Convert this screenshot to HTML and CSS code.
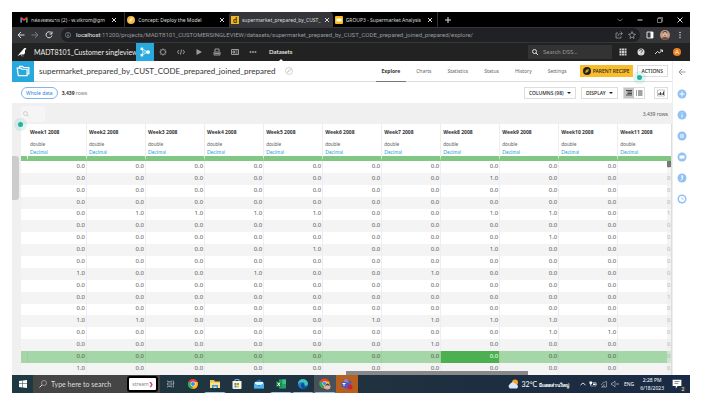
FILE: index.html
```html
<!DOCTYPE html>
<html lang="en">
<head>
<meta charset="utf-8">
<title>supermarket_prepared_by_CUST_CODE_prepared_joined_prepared</title>
<link rel="stylesheet" href="styles.css">
</head>
<body>
<div class="screen">
  <header class="tabs">
    <div class="tab tab-mail">
      <svg class="i8" viewBox="0 0 16 16"><path d="M1 3v10h3V7l4 3 4-3v6h3V3l-2-1-5 4-5-4z" fill="#ea4335"/><path d="M1 4v9h3V6z" fill="#4285f4"/><path d="M12 6v7h3V4z" fill="#34a853"/></svg>
      <span class="tab-name">กล่องจดหมาย (2) - w.vikrom@gm</span><button class="x" aria-label="Close"><svg class="i6" viewBox="0 0 12 12"><path d="M2 2l8 8M10 2l-8 8" class="ln"/></svg></button>
    </div>
    <div class="tab tab-concept">
      <svg class="i8" viewBox="0 0 16 16"><circle cx="8" cy="8" r="8" fill="#f4b942"/><path d="M4 12c1-5 4-8 8-9-1 5-4 8-8 9z" fill="#fff3c8"/></svg>
      <span class="tab-name">Concept: Deploy the Model</span><button class="x" aria-label="Close"><svg class="i6" viewBox="0 0 12 12"><path d="M2 2l8 8M10 2l-8 8" class="ln"/></svg></button>
    </div>
    <div class="tab tab-data on">
      <span class="dlogo">d</span>
      <span class="tab-name">supermarket_prepared_by_CUST_</span><button class="x" aria-label="Close"><svg class="i6" viewBox="0 0 12 12"><path d="M2 2l8 8M10 2l-8 8" class="ln"/></svg></button>
    </div>
    <div class="tab tab-group">
      <svg class="i8" viewBox="0 0 16 16"><rect width="16" height="16" rx="2" fill="#f9bc15"/><rect x="3" y="5" width="10" height="6" fill="#fff"/></svg>
      <span class="tab-name">GROUP3 - Supermarket Analysis</span><button class="x" aria-label="Close"><svg class="i6" viewBox="0 0 12 12"><path d="M2 2l8 8M10 2l-8 8" class="ln"/></svg></button>
    </div>
    <button class="plus" aria-label="New tab"><svg class="i8" viewBox="0 0 16 16"><path d="M8 2v12M2 8h12" class="ln"/></svg></button>
    <div class="wincontrols">
      <svg class="i6" viewBox="0 0 12 12"><path d="M1 4l5 4 5-4" class="thin"/></svg>
      <svg class="i6" viewBox="0 0 12 12"><path d="M1 6h10" class="ln"/></svg>
      <svg class="i6" viewBox="0 0 12 12"><path d="M1 3h8v8H1zM3 3V1h8v8H9" class="thin"/></svg>
      <svg class="i6" viewBox="0 0 12 12"><path d="M1 1l10 10M11 1L1 11" class="ln"/></svg>
    </div>
  </header>

  <div class="address">
    <svg class="i8" viewBox="0 0 16 16"><path d="M15 8H2M8 2L2 8l6 6" class="ln"/></svg>
    <svg class="i8 faint" viewBox="0 0 16 16"><path d="M1 8h13M8 2l6 6-6 6" class="ln"/></svg>
    <svg class="i8" viewBox="0 0 16 16"><path d="M13 4a6 6 0 1 0 1 5M14 1v5H9" class="ln"/></svg>
    <div class="url">
      <svg class="i6" viewBox="0 0 16 16"><circle cx="8" cy="8" r="7" class="thin"/><path d="M8 7v5M8 4v1" class="ln"/></svg>
      <span class="url-text"><b>localhost</b>:11200/projects/MADT8101_CUSTOMERSINGLEVIEW/datasets/supermarket_prepared_by_CUST_CODE_prepared_joined_prepared/explore/</span>
      <svg class="i8" viewBox="0 0 16 16"><path d="M6 4H2v10h10v-3M6 10c0-4 3-5 8-5M11 1l4 4-4 4" class="thin"/></svg>
      <svg class="i8" viewBox="0 0 16 16"><path d="M8 1l2 5 5 .5-4 3.500 1 5L8 12l-4 3 1-5-4-3.500L6 6z" class="thin"/></svg>
    </div>
    <svg class="i8" viewBox="0 0 16 16"><path d="M2 2h12v12H2z" class="ln"/><path d="M9 2h5v12H9z" fill="#fff"/></svg>
    <svg class="avatar" viewBox="0 0 20 20"><circle cx="10" cy="10" r="10" fill="#c79783"/><path d="M3 17q7-7 14 0a10 10 0 0 1-14 0z" fill="#6c4e46"/><circle cx="10" cy="8" r="5" fill="#e3bda6"/><path d="M5 8q0-6 5-6t5 6q-2-4-5-4T5 8z" fill="#4d3530"/><path d="M7 8h2M11 8h2M8 11h4" stroke="#684034"/></svg>
    <svg class="i8" viewBox="0 0 16 16"><g fill="#ddd"><circle cx="8" cy="3" r="1.500"/><circle cx="8" cy="8" r="1.500"/><circle cx="8" cy="13" r="1.500"/></g></svg>
  </div>

  <nav class="dssnav">
    <svg class="bird" viewBox="0 0 20 20"><path d="M17 2q-3-1-4 2L6 12l-5 6 7-3h6q3-3 2-9l3-2z" fill="#fff"/><path d="M9 15v3h4" class="thin"/></svg>
    <span class="project">MADT8101_Customer singleview</span>
    <a class="flow" href="#" aria-label="Flow"><svg class="i10" viewBox="0 0 16 16"><path d="M3 3l10 5-10 5M3 3l2 5h8M5 8l-2 5" stroke="#fff" fill="none"/><g fill="#fff"><rect x="1" y="1" width="4" height="4"/><rect x="1" y="11" width="4" height="4"/><circle cx="13" cy="8" r="3"/></g></svg></a>
    <div class="navicons">
      <svg class="i8" viewBox="0 0 16 16"><circle cx="8" cy="8" r="5" class="ln"/><path d="M8 0v3M8 13v3M0 8h3M13 8h3M2 2l2 2M12 12l2 2M14 2l-2 2M4 12l-2 2" class="thin"/></svg>
      <svg class="i8" viewBox="0 0 16 16"><path d="M4 4L1 8l3 4M12 4l3 4-3 4M9 3L7 13" class="ln"/></svg>
      <svg class="i8" viewBox="0 0 16 16"><path d="M3 2l11 6-11 6z" fill="#ddd"/></svg>
      <svg class="i8" viewBox="0 0 16 16"><path d="M4 7V2h8v5M2 14V8h12v6zM3 11h10" class="ln"/></svg>
      <svg class="i8" viewBox="0 0 16 16"><path d="M1 3h14v10H1zM4 6h3v4H4zM9 6h4M9 10h4" class="ln"/></svg>
      <svg class="i8" viewBox="0 0 16 16"><g fill="#ddd"><circle cx="3" cy="8" r="2"/><circle cx="8" cy="8" r="2"/><circle cx="13" cy="8" r="2"/></g></svg>
    </div>
    <a class="datasets" href="#">Datasets</a>
    <label class="search"><svg class="i6" viewBox="0 0 12 12"><circle cx="5" cy="5" r="4" class="ln"/><path d="M8 8l4 4" class="ln"/></svg><input type="text" placeholder="Search DSS..." aria-label="Search DSS"></label>
    <div class="navright">
      <svg class="i8" viewBox="0 0 16 16"><path d="M1 1h4v4H1zM6 1h4v4H6zM11 1h4v4h-4zM1 6h4v4H1zM6 6h4v4H6zM11 6h4v4h-4zM1 11h4v4H1zM6 11h4v4H6zM11 11h4v4h-4z" fill="#ccc"/></svg>
      <svg class="i8" viewBox="0 0 16 16"><circle cx="8" cy="8" r="7" fill="#ddd"/><path d="M5 6q0-3 3-3t3 3q0 1-3 3v1M8 12v1" stroke="#333" stroke-width="1.500" fill="none"/></svg>
      <svg class="i8" viewBox="0 0 16 16"><path d="M0 12l5-5 4 3 6-6M10 4h5v4" class="ln"/></svg>
      <span class="user">A</span>
    </div>
  </nav>

  <div class="work">
    <main class="main">
      <div class="titlebar">
        <span class="folder"><svg viewBox="0 0 24 20"><path d="M6 5V2h5l2 2h9v11h-3" class="fo"/><path d="M2 5h6l2 2h9v11H4z" class="fo"/></svg></span>
        <h1>supermarket_prepared_by_CUST_CODE_prepared_joined_prepared</h1>
        <svg class="i8 badge" viewBox="0 0 16 16"><circle cx="8" cy="8" r="7" fill="none" stroke="#aaa"/><path d="M5 11l1-3 5-4 1 1-5 5z" fill="none" stroke="#aaa"/></svg>
        <div class="sections">
          <a class="current" href="#">Explore</a><a href="#">Charts</a><a href="#">Statistics</a><a href="#">Status</a><a href="#">History</a><a href="#">Settings</a>
        </div>
        <button class="parent"><svg class="i8" viewBox="0 0 16 16"><circle cx="8" cy="8" r="8" fill="#222"/><path d="M4 12l2-6 6-2-2 6z" fill="#d9a21c"/></svg>PARENT RECIPE</button>
        <button class="actions">ACTIONS<span class="dot"></span></button>
      </div>
      <div class="toolbar">
        <button class="whole">Whole data</button>
        <span class="count"><b>3,439</b> rows</span>
        <button class="box columns">COLUMNS (98) <i class="caret"></i></button>
        <button class="box display">DISPLAY <i class="caret"></i></button>
        <div class="toggle">
          <button class="picked" aria-label="Compact"><svg class="i8" viewBox="0 0 16 16"><path d="M2 3h12M5 6h9M5 9h9M2 12h12" stroke="#444" stroke-width="2"/></svg></button>
          <button aria-label="List"><svg class="i8" viewBox="0 0 16 16"><path d="M2 4h2M6 4h9M2 8h2M6 8h9M2 12h2M6 12h9" stroke="#444" stroke-width="2"/></svg></button>
        </div>
        <button class="box chart" aria-label="Statistics"><svg class="i8" viewBox="0 0 16 16"><path d="M1 2h14v12H1z" fill="none" stroke="#888"/><path d="M4 12V8M7 12V6M10 12V8M13 12V5" stroke="#444" stroke-width="2"/></svg></button>
      </div>
      <div class="filter">
        <label class="find"><svg class="i6" viewBox="0 0 12 12"><circle cx="5" cy="5" r="4" fill="none" stroke="#aaa"/><path d="M8 8l3 3" stroke="#aaa"/></svg><input type="text" aria-label="Filter"></label>
        <span>3,439 rows</span>
        <span class="dot"></span>
      </div>
      <div class="gridarea">
        <span class="handle"></span>
        <div class="scroller">
          <table>
            <thead>
              <tr><th class="gut"></th><th>Week1 2008<small>double</small><em>Decimal</em></th><th>Week2 2008<small>double</small><em>Decimal</em></th><th>Week3 2008<small>double</small><em>Decimal</em></th><th>Week4 2008<small>double</small><em>Decimal</em></th><th>Week5 2008<small>double</small><em>Decimal</em></th><th>Week6 2008<small>double</small><em>Decimal</em></th><th>Week7 2008<small>double</small><em>Decimal</em></th><th>Week8 2008<small>double</small><em>Decimal</em></th><th>Week9 2008<small>double</small><em>Decimal</em></th><th>Week10 2008<small>double</small><em>Decimal</em></th><th>Week11 2008<small>double</small><em>Decimal</em></th></tr>
            </thead>
            <tbody>
              <tr><td></td><td>0.0</td><td>0.0</td><td>0.0</td><td>0.0</td><td>0.0</td><td>0.0</td><td>0.0</td><td>0.0</td><td>0.0</td><td>0.0</td><td>0.0</td></tr>
              <tr><td></td><td>0.0</td><td>0.0</td><td>0.0</td><td>0.0</td><td>0.0</td><td>0.0</td><td>0.0</td><td>1.0</td><td>0.0</td><td>0.0</td><td>0.0</td></tr>
              <tr><td></td><td>0.0</td><td>0.0</td><td>0.0</td><td>0.0</td><td>0.0</td><td>0.0</td><td>0.0</td><td>0.0</td><td>0.0</td><td>0.0</td><td>0.0</td></tr>
              <tr><td></td><td>0.0</td><td>0.0</td><td>0.0</td><td>0.0</td><td>0.0</td><td>0.0</td><td>0.0</td><td>0.0</td><td>0.0</td><td>0.0</td><td>0.0</td></tr>
              <tr><td></td><td>0.0</td><td>1.0</td><td>1.0</td><td>1.0</td><td>1.0</td><td>0.0</td><td>0.0</td><td>1.0</td><td>1.0</td><td>0.0</td><td>1.0</td></tr>
              <tr><td></td><td>0.0</td><td>0.0</td><td>0.0</td><td>0.0</td><td>0.0</td><td>0.0</td><td>0.0</td><td>0.0</td><td>0.0</td><td>0.0</td><td>0.0</td></tr>
              <tr><td></td><td>0.0</td><td>0.0</td><td>0.0</td><td>0.0</td><td>0.0</td><td>0.0</td><td>0.0</td><td>0.0</td><td>1.0</td><td>0.0</td><td>0.0</td></tr>
              <tr><td></td><td>0.0</td><td>0.0</td><td>0.0</td><td>0.0</td><td>1.0</td><td>0.0</td><td>0.0</td><td>1.0</td><td>0.0</td><td>0.0</td><td>0.0</td></tr>
              <tr><td></td><td>0.0</td><td>0.0</td><td>0.0</td><td>0.0</td><td>0.0</td><td>0.0</td><td>0.0</td><td>0.0</td><td>0.0</td><td>0.0</td><td>0.0</td></tr>
              <tr><td></td><td>1.0</td><td>0.0</td><td>0.0</td><td>1.0</td><td>0.0</td><td>0.0</td><td>1.0</td><td>0.0</td><td>0.0</td><td>0.0</td><td>0.0</td></tr>
              <tr><td></td><td>0.0</td><td>0.0</td><td>0.0</td><td>0.0</td><td>0.0</td><td>0.0</td><td>0.0</td><td>0.0</td><td>0.0</td><td>0.0</td><td>0.0</td></tr>
              <tr><td></td><td>0.0</td><td>0.0</td><td>0.0</td><td>0.0</td><td>0.0</td><td>0.0</td><td>0.0</td><td>0.0</td><td>0.0</td><td>0.0</td><td>1.0</td></tr>
              <tr><td></td><td>0.0</td><td>0.0</td><td>0.0</td><td>0.0</td><td>0.0</td><td>0.0</td><td>0.0</td><td>0.0</td><td>0.0</td><td>0.0</td><td>0.0</td></tr>
              <tr><td></td><td>1.0</td><td>1.0</td><td>0.0</td><td>0.0</td><td>0.0</td><td>1.0</td><td>1.0</td><td>1.0</td><td>1.0</td><td>0.0</td><td>0.0</td></tr>
              <tr><td></td><td>0.0</td><td>0.0</td><td>0.0</td><td>0.0</td><td>0.0</td><td>0.0</td><td>0.0</td><td>0.0</td><td>1.0</td><td>1.0</td><td>0.0</td></tr>
              <tr><td></td><td>0.0</td><td>0.0</td><td>0.0</td><td>0.0</td><td>0.0</td><td>0.0</td><td>1.0</td><td>0.0</td><td>0.0</td><td>0.0</td><td>0.0</td></tr>
              <tr class="sel"><td></td><td>0.0</td><td>0.0</td><td>0.0</td><td>0.0</td><td>0.0</td><td>0.0</td><td>0.0</td><td class="cell">0.0</td><td>0.0</td><td>0.0</td><td>0.0</td></tr>
              <tr><td></td><td>1.0</td><td>0.0</td><td>0.0</td><td>0.0</td><td>0.0</td><td>0.0</td><td>0.0</td><td>0.0</td><td>0.0</td><td>0.0</td><td>0.0</td></tr>
            </tbody>
          </table>
          <span class="vtrack"></span>
          <span class="hthumb"></span>
        </div>
      </div>
    </main>
    <aside class="rail">
      <svg class="i8" viewBox="0 0 16 16"><path d="M15 8H2M8 2L2 8l6 6" stroke="#999" stroke-width="2" fill="none"/></svg>
      <svg class="i10" viewBox="0 0 20 20"><circle cx="10" cy="10" r="9"/><path d="M10 5v10M5 10h10"/></svg>
      <svg class="i10" viewBox="0 0 20 20"><circle cx="10" cy="10" r="9"/><path d="M10 9v6M10 5v2"/></svg>
      <svg class="i10" viewBox="0 0 20 20"><circle cx="10" cy="10" r="9"/><path d="M6 8h8M6 12h8"/></svg>
      <svg class="i10" viewBox="0 0 20 20"><circle cx="10" cy="10" r="9"/><path class="solid" d="M5 7h10v6h-5l-2 2v-2H5z"/></svg>
      <svg class="i10" viewBox="0 0 20 20"><circle cx="10" cy="10" r="9"/><path d="M8 6h4l-3 4h3l-4 5"/></svg>
      <svg class="i10" viewBox="0 0 20 20"><circle cx="10" cy="10" r="9"/><circle class="face" cx="10" cy="10" r="6"/><path d="M10 7v3h3" class="hand"/></svg>
    </aside>
  </div>

  <footer class="taskbar">
    <button class="start" aria-label="Start"><svg class="i8" viewBox="0 0 16 16"><path d="M0 2l7-1v6H0zM8 1l8-1v7H8zM0 8h7v7l-7-1zM8 8h8v8l-8-1z" fill="#fff"/></svg></button>
    <label class="winsearch"><svg class="i8" viewBox="0 0 16 16"><circle cx="10" cy="6" r="5" class="thin"/><path d="M6 10l-5 5" class="ln"/></svg><input type="text" placeholder="Type here to search" aria-label="Type here to search"><span class="stream">stream<b>❯</b></span></label>
    <div class="apps">
      <span class="app"><svg class="i8" viewBox="0 0 16 16"><path d="M1 1v2h9V1M1 15v-2h9v2M1 6h9v4H1zM13 1v14M12 6h3" class="thin"/></svg></span>
      <span class="app"><svg class="i12" viewBox="0 0 24 24"><circle cx="12" cy="12" r="10" fill="#ea4335"/><path d="M12 12L3 7a10 10 0 0 0 8 15z" fill="#34a853"/><path d="M12 12l-1 10A10 10 0 0 0 21 8h-9z" fill="#fbbc05"/><circle cx="12" cy="12" r="5" fill="#fff"/><circle cx="12" cy="12" r="4" fill="#4285f4"/></svg></span>
      <span class="app open"><svg class="i12" viewBox="0 0 24 24"><path d="M2 4h8l2 3h10v13H2z" fill="#f5c542"/><path d="M2 9h20v11H2z" fill="#ffe08a"/><path d="M6 14h12v6h-3v-3H9v3H6z" fill="#3c9be0"/></svg></span>
      <span class="app"><svg class="i12" viewBox="0 0 24 24"><path d="M3 6h18v14q0 2-2 2H5q-2 0-2-2z" fill="#f4f4f4"/><path d="M8 6V3h8v3" stroke="#5bb5ea" stroke-width="2" fill="none"/><path d="M7 10h4v4H7z" fill="#f25022"/><path d="M12 10h4v4h-4z" fill="#7fba00"/><path d="M7 15h4v4H7z" fill="#00a4ef"/><path d="M12 15h4v4h-4z" fill="#ffb900"/></svg></span>
      <span class="app"><svg class="i12" viewBox="0 0 24 24"><path d="M2 9l10-6 10 6v12H2z" fill="#1976c9"/><path d="M4 8h16v6H4z" fill="#e8f4fc"/><path d="M2 10l10 6 10-6v11H2z" fill="#4cb4ee"/></svg></span>
      <span class="app open"><svg class="i12" viewBox="0 0 24 24"><path d="M8 3h14v18H8z" fill="#21a366"/><path d="M15 3h7v9h-7z" fill="#33c481"/><path d="M2 7h11v11H2z" fill="#107c41"/><path d="M5 9l5 7M10 9l-5 7" stroke="#fff" stroke-width="2"/></svg></span>
      <span class="app open"><svg class="i12" viewBox="0 0 24 24"><circle cx="12" cy="12" r="10" fill="#1b7fd4"/><path d="M2 12C2 0 20-1 22 11q0 5-7 4 2-6-4-7-6 0-9 4z" fill="#45c8b0"/><path d="M8 13q1-4 5-3 3 2 1 5 3 3 7 1-4 7-10 5-4-3-3-8z" fill="#0c4f97"/></svg></span>
      <span class="app open lit"><svg class="i12" viewBox="0 0 24 24"><circle cx="11" cy="11" r="10" fill="#ea4335"/><path d="M11 11L2 6a10 10 0 0 0 8 15z" fill="#34a853"/><path d="M11 11l-1 10A10 10 0 0 0 20 7h-9z" fill="#fbbc05"/><circle cx="11" cy="11" r="4" fill="#4285f4" stroke="#fff"/><circle cx="17" cy="17" r="6" fill="#d7b4a2"/><path d="M12 16q1-5 5-5t5 5q-5-3-10 0z" fill="#5b4038"/></svg></span>
      <span class="app alert"><svg class="i12" viewBox="0 0 24 24"><circle cx="10" cy="6" r="4" fill="#7b83eb"/><circle cx="18" cy="8" r="3" fill="#5059c9"/><path d="M4 10h16v6q-2 6-8 6t-8-6z" fill="#5059c9"/><path d="M1 8h10v10H1z" fill="#4b53bc"/><path d="M3 11h6M6 11v5" stroke="#fff" stroke-width="2"/><circle cx="18" cy="18" r="5" fill="#d1202f"/></svg></span>
    </div>
    <div class="tray">
      <svg class="i12" viewBox="0 0 24 24"><circle cx="16" cy="9" r="6" fill="#f7a32c"/><path d="M6 21a5 5 0 0 1 0-9 6 6 0 0 1 11 0 5 5 0 0 1 3 9z" fill="#d8e6f7"/></svg>
      <span class="weather">32°C <b>มีแดดส่วนใหญ่</b></span>
      <svg class="i6" viewBox="0 0 12 12"><path d="M1 8l5-4 5 4" class="ln"/></svg>
      <svg class="i8" viewBox="0 0 16 16"><path d="M3 5h11v7H3zM15 7v3" class="thin"/><path d="M1 3h5v4l-2 3-3-3zM8 7h5v3H8z" fill="#fff"/></svg>
      <svg class="i8" viewBox="0 0 16 16"><path d="M2 14h1M5 14q0-4 4-5M8 14q0-2 2-2M2 10q3-6 11-7v11H3" class="thin"/></svg>
      <svg class="i8" viewBox="0 0 16 16"><path d="M1 6h3l4-4v12l-4-4H1zM11 6l4 4M15 6l-4 4" class="thin"/></svg>
      <span class="lang">ENG</span>
      <span class="clock">2:28 PM<br>6/18/2023</span>
      <span class="notes"><svg class="i10" viewBox="0 0 16 16"><path d="M1 1h14v10H9l-3 4v-4H1z" fill="#fff"/><path d="M4 4h8M4 7h6" stroke="#444"/></svg><i>2</i></span>
    </div>
  </footer>
</div>
</body>
</html>
```
FILE: styles.css
```css
* { box-sizing: border-box; }
body {
  margin: 0;
  padding: 12px 30px 12px 12px;
  height: 100vh;
  background: #fff;
  color: #333;
  font: 5px/8px "Noto Sans", sans-serif;
}
button, input { font: inherit; color: inherit; border: 0; background: none; padding: 0; margin: 0; }
a { color: inherit; text-decoration: none; }
svg { display: block; flex: none; }
.ln, .thin { fill: none; stroke: #ddd; stroke-width: 2; }
.thin { stroke-width: 1; }
.i6 { width: 6px; height: 6px; }
.i8 { width: 8px; height: 8px; }
.i10 { width: 10px; height: 10px; }
.i12 { width: 12px; height: 12px; }
.faint { opacity: .4; }
.screen { height: 100%; display: grid; grid-template-rows: 15px 16px 18px 1fr 18px; }

/* Browser chrome */
.tabs { display: flex; background: #000; color: #ddd; min-width: 0; }
.tab { display: flex; align-items: center; gap: 3px; padding: 0 4px 0 2px; width: 15.3%; flex: none; }
.tab-mail { width: 16.7%; padding: 0 7px 0 8px; border-right: 1px solid #333; }
.tab-group { width: 15.5%; border-right: 1px solid #333; }
.on { background: #35363a; border-radius: 4px 4px 0 0; }
.tab-name { flex: 1; white-space: nowrap; }
.dlogo { flex: none; width: 8px; height: 8px; background: #f5b81c; color: #222; font: bold 7px/8px Lato, sans-serif; text-align: center; }
.plus { margin-left: 6px; }
.wincontrols { margin-left: auto; display: flex; align-items: center; gap: 14px; padding-right: 7px; }
.address { display: flex; align-items: center; gap: 6px; background: #35363a; color: #999; padding: 0 6px 0 5px; font: 6px/10px Roboto, sans-serif; }
.url { flex: 1; height: 14px; display: flex; align-items: center; gap: 5px; margin-left: 2px; padding: 0 4px; border-radius: 7px; background: #202124; min-width: 0; }
.url-text { flex: 1; white-space: nowrap; }
.url-text b { color: #eee; font-weight: 400; }
.avatar { width: 10px; height: 10px; }

/* Application bar */
.dssnav { display: flex; align-items: center; background: #222; color: #eee; font: 6px/8px Lato, sans-serif; }
.bird { width: 10px; height: 10px; margin: 0 7px 0 5px; }
.project { font-size: 7px; width: 102px; white-space: nowrap; }
.flow { width: 18px; height: 18px; background: #28a9dd; display: grid; place-items: center; }
.navicons { display: flex; gap: 10px; margin-left: 5px; opacity: .65; }
.datasets { height: 18px; line-height: 18px; margin-left: 12px; position: relative; font-weight: 600; }
.datasets::after { content: ""; position: absolute; left: 50%; bottom: 0; margin-left: -2px; border: 2px solid transparent; border-top: 0; border-bottom-color: #fff; }
.search { margin-left: auto; width: 84px; height: 14px; display: flex; align-items: center; gap: 5px; padding: 0 4px; background: #333; }
.search input { flex: 1; min-width: 0; }
.search input::placeholder { color: #999; }
.navright { display: flex; align-items: center; gap: 10px; padding: 0 9px 0 7px; }
.user { width: 8px; height: 8px; border-radius: 50%; background: #ef7d22; color: #fff; text-align: center; }

/* Dataset page */
.work { display: flex; min-height: 0; }
.main { flex: 1; min-width: 0; display: flex; flex-direction: column; }
.titlebar { flex: none; height: 21px; display: flex; align-items: center; border-bottom: 1px solid #ddd; padding-right: 4px; }
.folder { width: 22px; height: 21px; background: #28a9dd; display: grid; place-items: center; flex: none; }
.folder svg { width: 14px; height: 12px; }
.fo { fill: none; stroke: #fff; stroke-width: 2; }
h1 { margin: 0 0 0 5px; font: 400 8px/12px Lato, sans-serif; white-space: nowrap; }
.badge { margin-left: 10px; }
.sections { display: flex; margin-left: auto; color: #666; height: 21px; line-height: 21px; gap: 4px; margin-right: 7px; }
.sections a { padding: 0 6px; }
.sections .current { color: #333; font-weight: 700; border-bottom: 1px solid #777; }
.parent { display: flex; align-items: center; gap: 2px; height: 12px; padding: 0 3px; background: #f9bd2b; color: #222; white-space: nowrap; font-weight: 500; }
.actions { position: relative; height: 12px; padding: 0 4px; margin-left: 4px; border: 1px solid #ddd; color: #222; font-weight: 500; }
.dot { position: absolute; z-index: 1; width: 5px; height: 5px; border-radius: 50%; background: #22b2a4; box-shadow: 0 0 0 4px #22b2a422; left: -1px; bottom: -4px; }
.toolbar { flex: none; height: 21px; display: flex; align-items: center; padding: 0 4px 0 9px; }
.whole { height: 12px; padding: 0 4px; border: 1px solid #7fb4ef; border-radius: 6px; color: #2f7fd8; line-height: 8px; }
.count { margin-left: 4px; color: #777; }
.count b { color: #333; font-weight: 700; }
.box { height: 12px; border: 1px solid #ddd; padding: 0 4px; color: #222; white-space: nowrap; font-weight: 500; }
.columns { margin-left: auto; }
.display { margin-left: 5px; }
.caret { display: inline-block; border: 2px solid transparent; border-top-color: #222; border-bottom: 0; margin: 0 0 1px 2px; }
.toggle { display: flex; margin-left: 5px; border: 1px solid #ddd; }
.toggle button { width: 10px; height: 10px; display: grid; place-items: center; }
.toggle .picked { background: #c4c4c4; }
.box.chart { margin-left: 9px; padding: 0 2px; }
.filter { position: relative; flex: none; height: 21px; display: flex; align-items: center; justify-content: space-between; padding: 0 4px 0 9px; background: #f0f0f0; color: #555; }
.filter .dot { left: 6px; bottom: -3px; }
.find { display: flex; align-items: center; width: 24px; height: 16px; padding-left: 2px; background: #f5f5f5; }
.find input { width: 12px; }
.gridarea { position: relative; flex: 1; min-height: 0; padding-left: 9px; background: #f0f0f0; border-right: 1px solid #ddd; }
.handle { position: absolute; left: 0; top: 32px; width: 7px; height: 44px; background: #ccc; border-radius: 0 3px 3px 0; }
.scroller { position: relative; height: 100%; overflow: hidden; background: #fff; }
table { width: 101%; height: 100%; table-layout: fixed; border-collapse: separate; border-spacing: 0; }
th { height: 37px; padding: 4px 0 0 2px; text-align: left; vertical-align: top; font-weight: 700; border-right: 1px solid #eee; border-bottom: 5px solid #81c784; white-space: nowrap; }
th.gut { width: 7px; padding: 0; border-right-color: #fff; }
small, em { display: block; font: 400 5px/8px Lato, sans-serif; color: #666; }
small { margin-top: 4px; }
em { color: #2da5d8; }
td { padding: 0 1px 2px 0; text-align: right; font-size: 6px; line-height: 8px; border-right: 1px solid #eee; color: #555; }
td:first-child { border-right-color: transparent; }
tr:nth-child(even) td { background: #f4f4f4; }
tr.sel td { background: #a5d6a7; border-color: #9bd09e; }
tr.sel td.cell { background: #4caf50; color: #fff; }
.vtrack { position: absolute; right: 0; top: 37px; bottom: 0; width: 4px; background: linear-gradient(#777 6px, #eeeeee99 6px); }
.hthumb { position: absolute; left: 50%; width: 28%; bottom: 0; height: 4px; background: #888; }
.rail { width: 18px; display: flex; flex-direction: column; align-items: center; gap: 11px; padding-top: 7px; border-left: 1px solid #eee; }
.rail .i8 { margin-bottom: 2px; }
.rail circle { fill: #90c2f4; }
.rail .face { fill: #fff; }
.rail .i10 path { fill: none; stroke: #fff; stroke-width: 2; }
.rail .i10 .solid { fill: #fff; stroke: none; }
.rail .i10 .hand { stroke: #90c2f4; }

/* Taskbar */
.taskbar { display: flex; background: linear-gradient(90deg, #1d3941, #20313f 50%, #192a44); color: #fff; }
.start { width: 21px; display: grid; place-items: center; }
.winsearch { display: flex; align-items: center; gap: 4px; width: 127px; padding: 0 2px 0 6px; background: #454545; }
.winsearch input { flex: 1; min-width: 0; font: 7px/12px Lato, sans-serif; height: 12px; }
.winsearch input::placeholder { color: #ddd; }
.stream { height: 16px; width: 31px; border: 2px solid #000; border-radius: 3px; background: #fff; color: #888; line-height: 12px; text-align: center; white-space: nowrap; }
.stream b { color: #d1202f; }
.apps { display: flex; }
.app { width: 22px; display: grid; place-items: center; }
.open { border-bottom: 1px solid #9cc3dc; border-left: 2px solid transparent; border-right: 2px solid transparent; }
.lit { background: #45525c; }
.alert { background: #b5601f; }
.tray { margin-left: auto; display: flex; align-items: center; gap: 3px; padding-right: 8px; white-space: nowrap; }
.weather { font: 7px/8px Lato, sans-serif; margin-right: 8px; }
.weather b { font-size: 5px; font-weight: 600; }
.lang { margin-left: 2px; }
.clock { text-align: center; margin: 0 5px 0 3px; }
.notes { position: relative; }
.notes i { position: absolute; right: -4px; bottom: -3px; width: 6px; height: 6px; border-radius: 50%; background: #333; font: 5px/6px Roboto, sans-serif; text-align: center; }
```
